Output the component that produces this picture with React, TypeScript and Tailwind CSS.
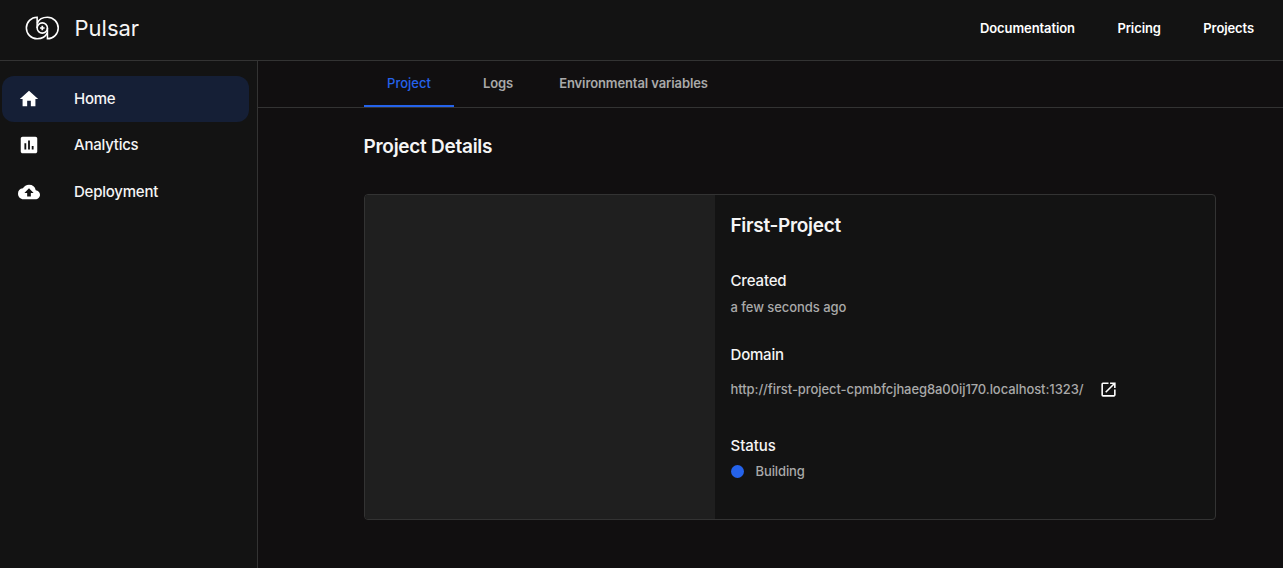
import React from "react";
import { MdHome, MdAssessment, MdCloudUpload, MdOpenInNew } from "react-icons/md";

function Logo() {
  return (
    <svg width="34" height="24" viewBox="-0.5 0 35 24" fill="none" stroke="#fff" strokeWidth="1.6">
      <path d="M22.6 12v11.1a11.05 11.05 0 0 0 0-22.2C17.5 .9 13.7 3.5 12.2 7" />
      <path d="M12 12V.9a11.05 11.05 0 0 0 0 22.2c5.1 0 8.9-2.6 10.4-6.1" />
      <circle cx="17.3" cy="12" r="5.3" />
      <path d="M17.3 9.6v4.8M14.9 12h4.8" strokeWidth="1.8" />
    </svg>
  );
}

const nav = [
  { label: "Home", Icon: MdHome, active: true },
  { label: "Analytics", Icon: MdAssessment, active: false },
  { label: "Deployment", Icon: MdCloudUpload, active: false },
];

export default function App() {
  return (
    <div className="flex h-[568px] w-full flex-col overflow-hidden bg-[#110f10] font-['Inter',sans-serif] text-[#f5f5f5]">
      <header className="flex h-[61px] shrink-0 items-center border-b border-[#333] bg-[#131313] pr-[29px] pb-1 pl-[25px]">
        <Logo />
        <span className="ml-[15.5px] text-[22px] leading-7">Pulsar</span>
        <nav className="mt-0.5 ml-auto flex gap-[42.5px] text-[13px] font-semibold tracking-[-0.1px] text-white">
          <a>Documentation</a>
          <a>Pricing</a>
          <a>Projects</a>
        </nav>
      </header>
      <div className="flex min-h-0 flex-1">
        <aside className="w-[258px] shrink-0 border-r border-[#333] bg-[#131313] pt-[15px] pr-2 pl-0.5">
          {nav.map(({ label, Icon, active }) => (
            <a
              key={label}
              className={`flex h-[46px] items-center rounded-xl pl-4 text-[15px] font-medium tracking-[-0.23px] last:mt-px ${active ? "bg-[#151f36]" : ""}`}
            >
              <Icon className="size-[22px] text-white" />
              <span className="ml-[34px]">{label}</span>
            </a>
          ))}
        </aside>
        <main className="min-w-0 flex-1">
          <div className="flex h-[47px] border-b border-[#333] pl-[106px] text-[13px] font-medium text-[#a9a9a9]">
            <a className="flex w-[90px] justify-center border-b-2 border-[#2563eb] pt-[13px] text-[#2563eb]">Project</a>
            <a className="ml-[29px] pt-[13px] font-semibold tracking-[-0.1px]">Logs</a>
            <a className="ml-[46px] pt-[13px] font-semibold tracking-[-0.1px]">Environmental variables</a>
          </div>
          <div className="pr-[67px] pl-[106px]">
            <h1 className="-ml-[0.5px] pt-[25px] text-[19px] leading-7 font-semibold tracking-[-0.27px]">Project Details</h1>
            <section className="mt-[33px] flex h-[326px] overflow-hidden rounded border border-[#333] bg-[#131313]">
              <div className="w-[350px] bg-[#1f1f1f]" />
              <div className="pt-[17px] pl-[15.5px] text-[13px] font-medium text-[#a9a9a9]">
                <h2 className="text-[19px] leading-7 font-semibold tracking-[-0.3px] text-[#f5f5f5]">First-Project</h2>
                <h3 className="mt-[29px] text-[15px] leading-6 tracking-[-0.15px] text-[#f5f5f5]">Created</h3>
                <p className="mt-1 leading-5 tracking-[-0.05px]">a few seconds ago</p>
                <h3 className="mt-[26px] text-[15px] leading-6 tracking-[-0.2px] text-[#f5f5f5]">Domain</h3>
                <div className="mt-3 flex items-center leading-5">
                  <span className="tracking-[-0.08px]">http://first-project-cpmbfcjhaeg8a00ij170.localhost:1323/</span>
                  <MdOpenInNew className="ml-4 size-[19px] text-white" />
                </div>
                <h3 className="mt-[35px] text-[15px] leading-6 tracking-[-0.05px] text-[#f5f5f5]">Status</h3>
                <div className="mt-[3px] flex items-center gap-3 leading-5 tracking-[-0.1px]">
                  <span className="size-[13px] rounded-full bg-[#2563eb]" />
                  Building
                </div>
              </div>
            </section>
          </div>
        </main>
      </div>
    </div>
  );
}
